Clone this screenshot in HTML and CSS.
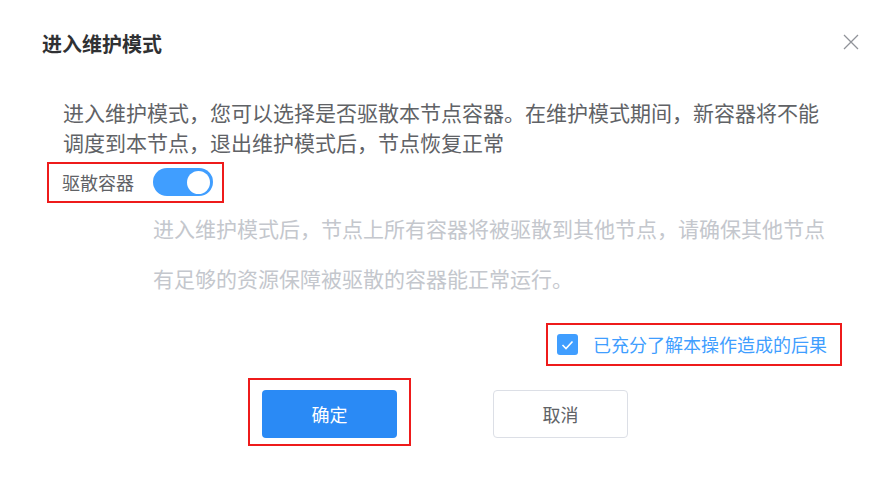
FILE: index.html
```html
<!DOCTYPE html>
<html lang="zh-CN">
<head>
  <meta charset="UTF-8">
  <title>进入维护模式</title>
  <link rel="stylesheet" href="styles.css">
</head>
<body>

<div class="dialog">
  <!-- Header -->
  <div class="dialog-header">
    <h1 class="dialog-title">进入维护模式</h1>
    <a href="#" class="dialog-close" aria-label="关闭">
      <svg width="16" height="16" viewBox="0 0 16 16">
        <path d="M1 1 L15 15 M15 1 L1 15" stroke="#909399" stroke-width="1.3" fill="none"/>
      </svg>
    </a>
  </div>

  <!-- Body -->
  <div class="dialog-body">
    <p class="intro">进入维护模式，您可以选择是否驱散本节点容器。在维护模式期间，新容器将不能调度到本节点，退出维护模式后，节点恢复正常</p>

    <div class="switch-row highlight">
      <span class="switch-label">驱散容器</span>
      <span class="switch is-on"><span class="switch-knob"></span></span>
    </div>

    <p class="tip">进入维护模式后，节点上所有容器将被驱散到其他节点，请确保其他节点有足够的资源保障被驱散的容器能正常运行。</p>

    <div class="confirm-line">
      <label class="check-row highlight">
        <span class="checkbox">
          <svg width="13" height="10" viewBox="0 0 13 10">
            <path d="M1.5 5 L5 8.5 L11.5 1.5" stroke="#fff" stroke-width="1.6" fill="none"/>
          </svg>
        </span>
        <span class="check-label">已充分了解本操作造成的后果</span>
      </label>
    </div>
  </div>

  <!-- Footer -->
  <div class="dialog-footer">
    <div class="ok-wrap highlight">
      <button class="btn btn-primary">确定</button>
    </div>
    <button class="btn btn-default">取消</button>
  </div>
</div>

</body>
</html>
```

FILE: styles.css
```css
:root {
  --primary-color: #2a8af5;
  --switch-color: #409eff;
  --title-color: #303133;
  --text-color: #606266;
  --muted-color: #c4c7cd;
  --border-color: #dcdfe6;
  --mark-color: #ee1b1b;
}

body {
  margin: 0;
  background: #fff;
  font-family: "Noto Sans CJK SC", "Noto Sans", sans-serif;
  color: var(--text-color);
}

.dialog {
  width: 889px;
}

.dialog-header {
  display: flex;
  justify-content: space-between;
  align-items: flex-start;
  padding: 31px 30px 0 42px;
}

.dialog-title {
  margin: 0;
  font-size: 20px;
  line-height: 26px;
  font-weight: 700;
  color: var(--title-color);
}

.dialog-close {
  display: block;
  margin-top: 3px;
  line-height: 0;
}

.intro {
  margin: 40px 0 0;
  padding-left: 63px;
  width: 765px;
  font-size: 21px;
  line-height: 30px;
}

.highlight {
  border: 2px solid var(--mark-color);
}

.switch-row {
  display: flex;
  align-items: center;
  gap: 19px;
  width: max-content;
  margin: 5px 0 0 47px;
  padding: 4px 9px 5px 13px;
}

.switch-label {
  font-size: 18px;
  line-height: 28px;
}

.switch {
  display: flex;
  align-items: center;
  justify-content: flex-end;
  width: 60px;
  height: 28px;
  padding: 0 3px;
  box-sizing: border-box;
  border-radius: 14px;
  background: var(--switch-color);
}

.switch-knob {
  width: 23px;
  height: 23px;
  border-radius: 50%;
  background: #fff;
}

.tip {
  margin: 0;
  padding-left: 153px;
  width: 690px;
  font-size: 21px;
  line-height: 50px;
  color: var(--muted-color);
}

.confirm-line {
  display: flex;
  justify-content: flex-end;
  padding-right: 47px;
  margin-top: 20px;
}

.check-row {
  display: flex;
  align-items: center;
  gap: 15px;
  padding: 9px 13px 9px 9px;
  cursor: pointer;
}

.checkbox {
  display: flex;
  align-items: center;
  justify-content: center;
  width: 21px;
  height: 21px;
  border-radius: 3px;
  background: var(--switch-color);
}

.check-label {
  font-size: 18px;
  line-height: 21px;
  color: var(--switch-color);
}

.dialog-footer {
  display: flex;
  align-items: flex-start;
  gap: 82px;
  padding-left: 248px;
  margin-top: 12px;
}

.ok-wrap {
  padding: 10px 12px 6px;
}

.btn {
  display: block;
  width: 135px;
  height: 48px;
  border-radius: 4px;
  font-family: inherit;
  font-size: 18px;
  cursor: pointer;
}

.btn-primary {
  border: none;
  background: var(--primary-color);
  color: #fff;
}

.btn-default {
  margin-top: 12px;
  border: 1px solid var(--border-color);
  background: #fff;
  color: var(--text-color);
}
```
